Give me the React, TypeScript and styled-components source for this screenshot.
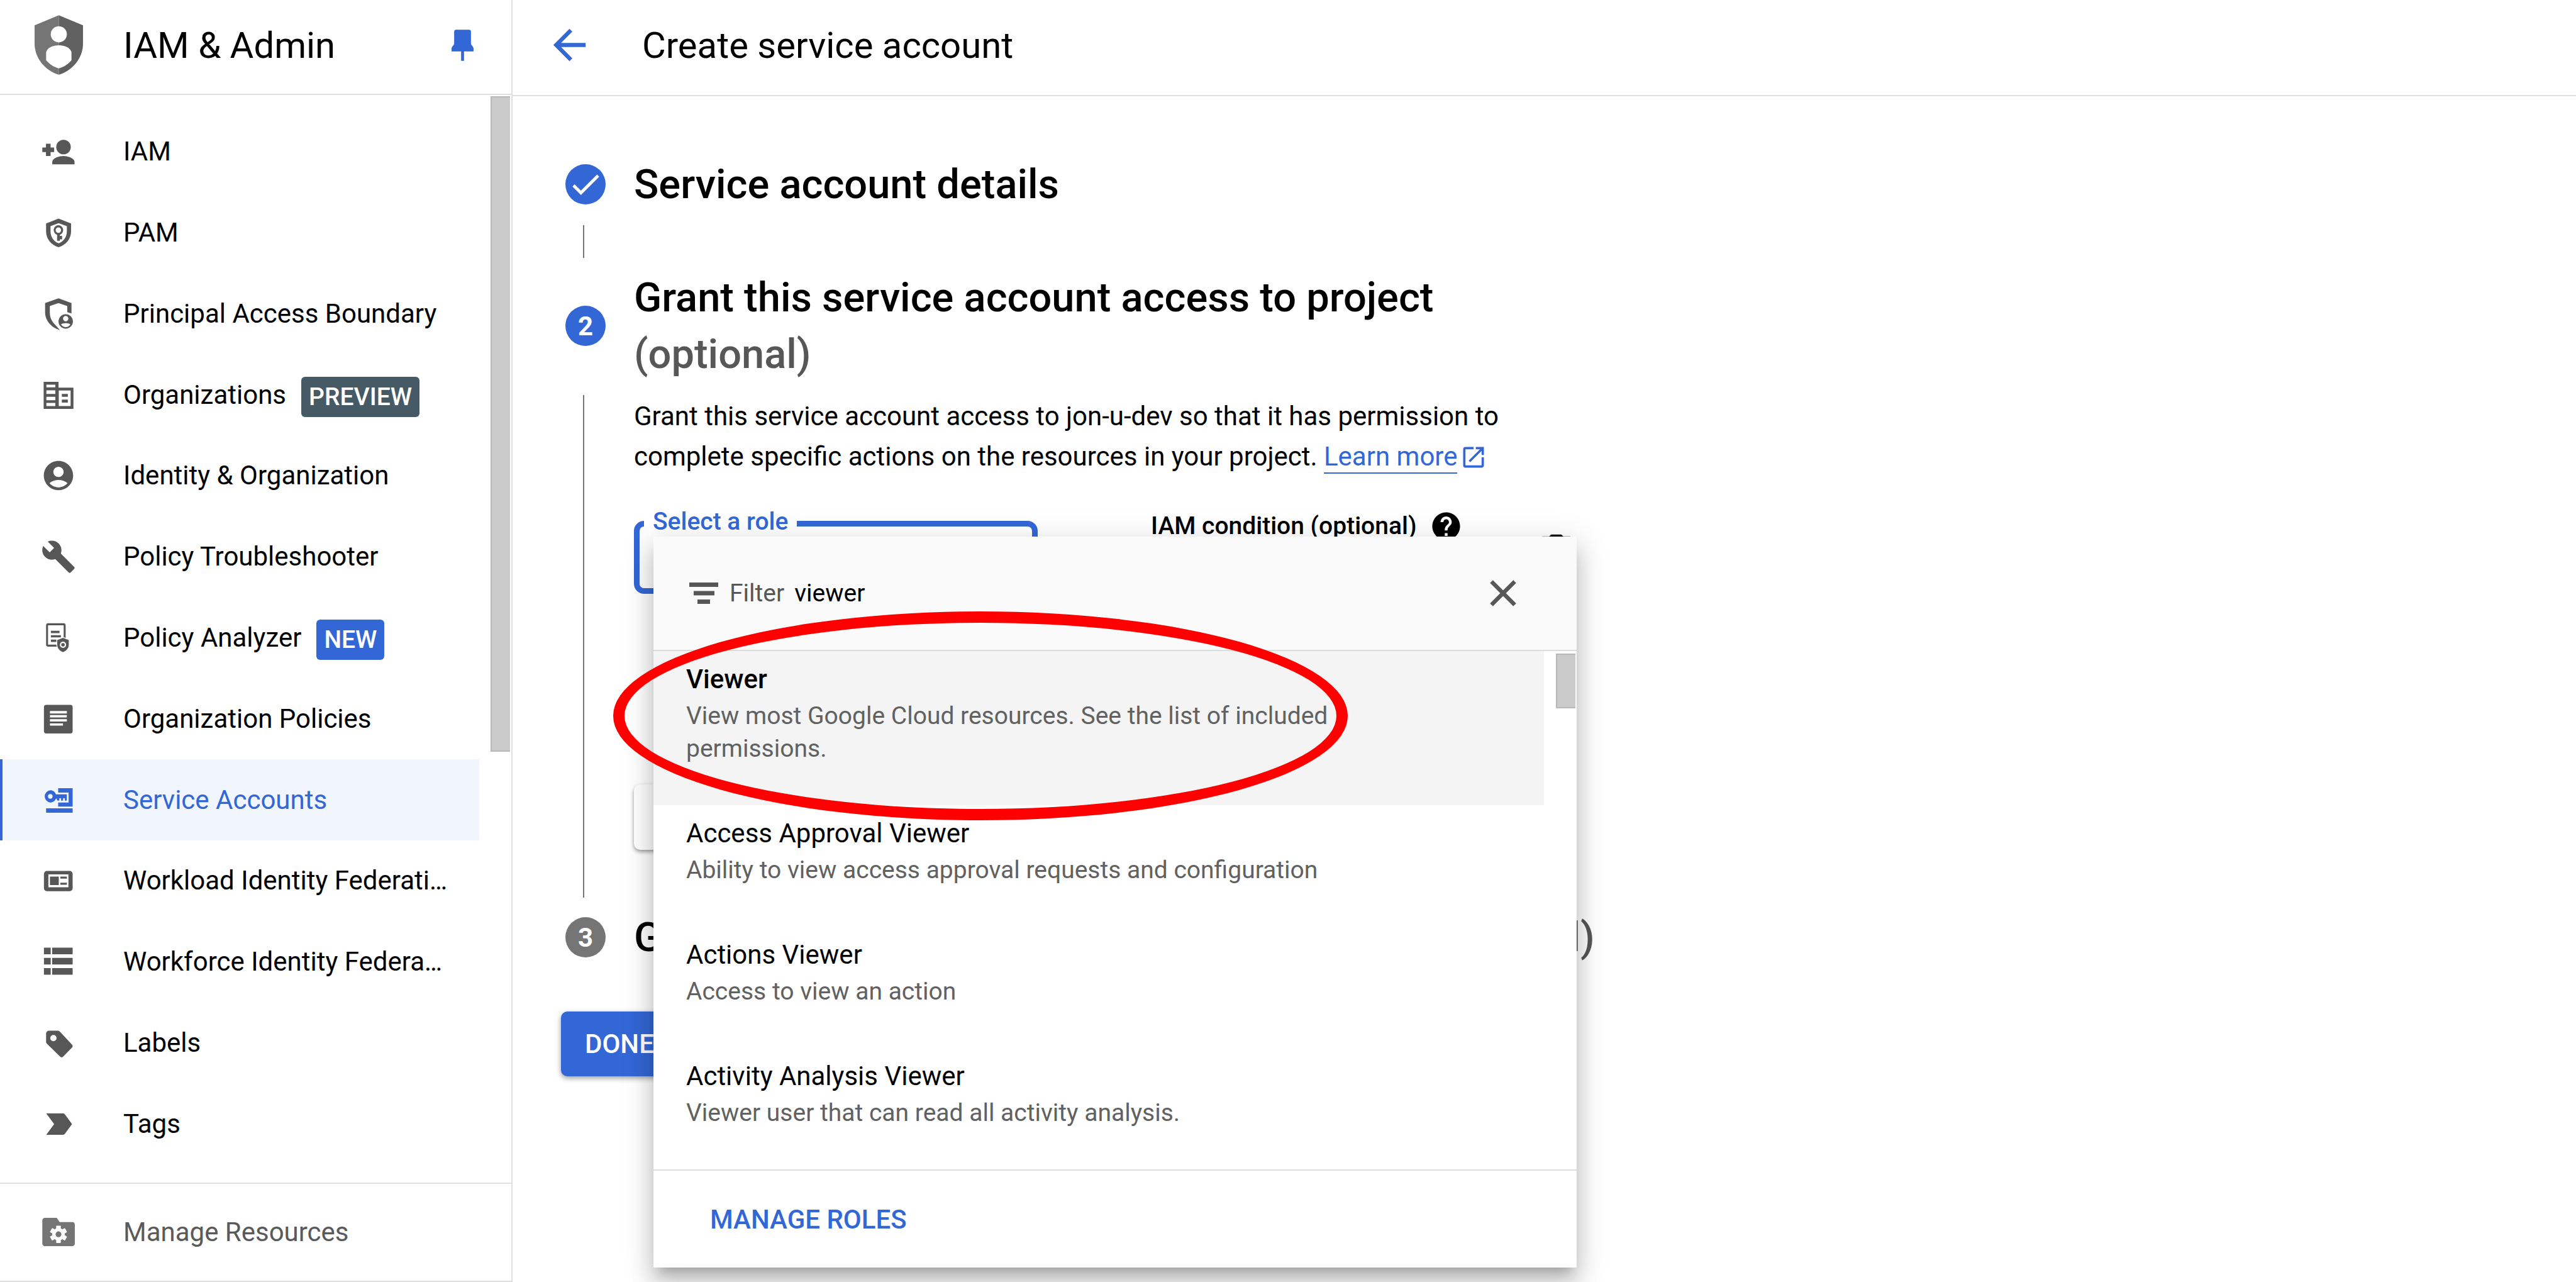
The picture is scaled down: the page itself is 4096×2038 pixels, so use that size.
import React, { useState } from "react";
import styled, { createGlobalStyle } from "styled-components";
import {
  MdAccountCircle,
  MdArrowBack,
  MdBuild,
  MdCheck,
  MdDelete,
  MdHelp,
  MdOpenInNew,
} from "react-icons/md";

const blue = "#3367d6";
const grey = "#757575";
const darkGrey = "#575757";
const rule = "#e0e0e0";

const GlobalStyle = createGlobalStyle`
  *, *::before, *::after { box-sizing: border-box; }
  body {
    margin: 0;
    background: #fff;
    color: #000;
    font-family: Roboto, "Liberation Sans", sans-serif;
    font-size: 42px;
  }
  h1, h2, p, ul, ol { margin: 0; padding: 0; }
  ul, ol { list-style: none; }
  button, input { font: inherit; color: inherit; border: 0; padding: 0; background: none; }
  a { color: inherit; text-decoration: none; }
  svg { display: block; flex: none; }
`;

const Page = styled.div`
  display: grid;
  grid-template-columns: 815px minmax(0, 1fr);
  height: 100vh;
  overflow: hidden;
`;

/* Sidebar */

const Sidebar = styled.aside`
  display: flex;
  flex-direction: column;
  min-height: 0;
  border-right: 2px solid ${rule};
  border-bottom: 2px solid ${rule};
`;

const SidebarHeader = styled.header`
  display: flex;
  align-items: center;
  height: 151px;
  padding: 0 60px 6px 55px;
  border-bottom: 2px solid ${rule};
`;

const BarTitle = styled.h1`
  font-size: 58px;
  line-height: 72px;
  font-weight: 400;
`;

const ProductTitle = styled(BarTitle)`
  flex: 1;
  padding-left: 64px;
`;

const IconButton = styled.button<{ $color: string }>`
  display: flex;
  color: ${(p) => p.$color};
  cursor: pointer;
`;

const NavScroll = styled.nav`
  display: flex;
  flex: 1;
  min-height: 0;
`;

const NavList = styled.ul`
  display: flex;
  flex-direction: column;
  width: 762px;
  padding: 26px 0 29px;
`;

const NavItem = styled.li`
  flex: 1;
  display: flex;
`;

const NavLink = styled.a<{ $active?: boolean }>`
  flex: 1;
  min-width: 0;
  display: flex;
  align-items: center;
  padding: 0 48px 0 61px;
  border-left: 4px solid ${(p) => (p.$active ? blue : "transparent")};
  background: ${(p) => (p.$active ? "#f0f5fe" : "transparent")};
  color: ${(p) => (p.$active ? blue : "#000")};

  svg {
    color: ${(p) => (p.$active ? blue : darkGrey)};
  }
`;

const NavText = styled.span`
  margin-left: 75px;
  line-height: 64px;
  white-space: nowrap;
  overflow: hidden;
  text-overflow: ellipsis;
`;

const Badge = styled.span<{ $color: string }>`
  margin: 6px 0 0 24px;
  padding: 0 12px;
  border-radius: 6px;
  background: ${(p) => p.$color};
  color: #fff;
  font-size: 39px;
  line-height: 64px;
  font-weight: 500;
`;

const Track = styled.div`
  flex: 1;
  display: flex;
  justify-content: flex-end;
  padding: 2px 2px 0 0;
`;

const Thumb = styled.div<{ $height: number }>`
  width: 31px;
  height: ${(p) => p.$height}px;
  background: #cbcbcb;
  border: 2px solid #b8b8b8;
  border-right: 0;
`;

const SidebarFooter = styled.a`
  display: flex;
  align-items: center;
  height: 156px;
  padding-left: 65px;
  border-top: 2px solid ${rule};
  color: #5a5a5a;

  svg {
    color: ${grey};
  }
`;

/* Main column */

const Main = styled.main`
  min-width: 0;
`;

const TopBar = styled.header`
  display: flex;
  align-items: center;
  gap: 77px;
  height: 153px;
  padding: 0 52px 8px;
  border-bottom: 2px solid ${rule};
`;

const Stepper = styled.ol`
  padding: 95px 0 0 84px;
`;

const Step = styled.li`
  display: grid;
  grid-template-columns: 64px 1536px;
  column-gap: 45px;
`;

const StepMarker = styled.span<{ $color: string }>`
  align-self: center;
  display: flex;
  align-items: center;
  justify-content: center;
  width: 64px;
  height: 64px;
  border-radius: 50%;
  background: ${(p) => p.$color};
  color: #fff;
  font-weight: 700;
`;

const StepTitle = styled.h2`
  font-size: 65px;
  line-height: 90px;
  font-weight: 500;
`;

const Muted = styled.span`
  color: ${darkGrey};
`;

const StepLine = styled.div`
  width: 2px;
  min-height: 52px;
  margin: 20px 0 18px 28px;
  background: ${grey};
`;

const StepBody = styled.div`
  padding: 22px 0 94px;
`;

const Description = styled.p`
  line-height: 64px;
`;

const LearnMore = styled.a`
  display: inline-flex;
  align-items: center;
  gap: 4px;
  color: ${blue};
  line-height: 50px;

  span {
    border-bottom: 2px solid ${blue};
  }
`;

const FieldRow = styled.div`
  display: flex;
  align-items: flex-start;
  margin-top: 46px;
`;

const RoleField = styled.div`
  position: relative;
  width: 642px;
  height: 116px;
  margin: 24px 180px 0 0;
  border: 9px solid ${blue};
  border-radius: 16px;
`;

const FloatingLabel = styled.span`
  position: absolute;
  left: 7px;
  top: -34px;
  padding: 0 14px;
  background: #fff;
  color: ${blue};
  font-size: 39px;
  line-height: 52px;
  font-weight: 500;
`;

const Condition = styled.div`
  display: flex;
  align-items: center;
  gap: 20px;
  font-size: 39px;
  line-height: 64px;
  font-weight: 500;
  white-space: nowrap;
`;

const DeleteButton = styled(IconButton)`
  margin: 36px 0 0 110px;
`;

const AddRole = styled.button`
  display: block;
  width: 470px;
  height: 104px;
  margin-top: 303px;
  border-radius: 10px;
  background: #fff;
  box-shadow: 0 3px 6px rgba(0, 0, 0, 0.4);
`;

const DoneButton = styled.button`
  display: block;
  height: 103px;
  margin: 73px 0 0 77px;
  padding: 0 38px;
  border-radius: 10px;
  background: ${blue};
  box-shadow: 0 3px 8px rgba(0, 0, 0, 0.4);
  color: #fff;
  font-weight: 500;
`;

/* Role picker */

const Popup = styled.div`
  position: absolute;
  z-index: 2;
  left: 22px;
  top: 16px;
  width: 1468px;
  background: #fff;
  box-shadow: 0 16px 16px -10px rgba(0, 0, 0, 0.2),
    0 26px 32px 3px rgba(0, 0, 0, 0.14), 0 10px 45px 6px rgba(0, 0, 0, 0.12);
`;

const FilterBar = styled.div`
  display: flex;
  align-items: center;
  height: 182px;
  padding: 0 96px 0 57px;
  border-bottom: 2px solid #dcdcdc;
  background: #fafafa;
  font-size: 39px;

  label {
    display: flex;
    align-items: center;
    gap: 18px;
    color: ${darkGrey};
  }

  input {
    flex: 1;
    min-width: 0;
    padding-left: 16px;
    color: #000;
    outline: 0;
  }
`;

const RoleScroll = styled.div`
  display: flex;
`;

const RoleList = styled.ul`
  width: 1416px;
`;

const RoleOption = styled.button<{ $active?: boolean }>`
  display: block;
  width: 100%;
  padding: 12px 300px 64px 52px;
  background: ${(p) => (p.$active ? "#f4f4f4" : "#fff")};
  text-align: left;
  cursor: pointer;
`;

const RoleName = styled.span<{ $strong?: boolean }>`
  display: block;
  line-height: 65px;
  font-weight: ${(p) => (p.$strong ? 500 : 400)};
`;

const RoleHint = styled.span`
  display: block;
  color: #616161;
  font-size: 39px;
  line-height: 52px;
`;

const PopupTrack = styled(Track)`
  padding: 4px 2px 0 0;
`;

const PopupFooter = styled.footer`
  display: flex;
  align-items: center;
  height: 156px;
  padding-left: 90px;
  border-top: 2px solid ${rule};
`;

const TextButton = styled.button`
  color: ${blue};
  font-weight: 500;
  cursor: pointer;
`;

const Highlight = styled.div`
  position: absolute;
  left: -64px;
  top: 119px;
  width: 1168px;
  height: 332px;
  border: 18px solid #f00;
  border-radius: 50%;
  pointer-events: none;
`;

/* Icons */

const Glyph = ({ children }: { children: React.ReactNode }) => (
  <svg width="56" height="56" viewBox="0 0 61 61" fill="currentColor" aria-hidden="true">
    {children}
  </svg>
);

const ProductLogo = () => (
  <svg width="77" height="95" viewBox="0 0 84 103" aria-hidden="true">
    <path d="M42 0 0 17.5V49c0 25 18 47 42 54z" fill="#757575" />
    <path d="M42 0 84 17.5V49c0 25-18 47-42 54z" fill="#616161" />
    <circle cx="42" cy="33" r="14" fill="#fff" />
    <path d="M20 64c2-8 12-12 22-12s20 4 22 12v14c-5 6-13 12-22 14-9-2-17-8-22-14z" fill="#fff" />
  </svg>
);

const PinIcon = () => (
  <svg width="35" height="50" viewBox="0 0 38 54" fill="currentColor" aria-hidden="true">
    <path d="M8 0h22a3.500 3.500 0 0 1 3.500 3.500V24c0 3 4.500 5 4.500 9v4.500H21.500V54h-5V37.500H0V33c0-4 4.500-6 4.500-9V3.500A3.500 3.500 0 0 1 8 0z" />
  </svg>
);

const FilterIcon = () => (
  <svg width="46" height="34" viewBox="0 0 46 34" fill="currentColor" aria-hidden="true">
    <path d="M0 0h46v7H0zM7 13.500h33v7H7zM13 27h20v7H13z" />
  </svg>
);

const CloseIcon = () => (
  <svg width="42" height="42" viewBox="0 0 42 42" stroke="currentColor" strokeWidth="6.500" aria-hidden="true">
    <path d="M2.500 2.500l37 37M39.500 2.500l-37 37" />
  </svg>
);

const AddPersonIcon = () => (
  <Glyph>
    <path d="M8.800 17h8v6.400H23v7.800h-6.200V38h-8v-6.800H2.500v-7.800h6.300z" />
    <circle cx="39.200" cy="22.600" r="12.600" />
    <path d="M19.700 52.500v-4c0-7 12-10.500 19.300-10.500s19.300 3.500 19.300 10.500v4z" />
  </Glyph>
);

const PamIcon = () => (
  <Glyph>
    <path
      fillRule="evenodd"
      d="M30.7 6 52.3 14.5V28c0 13-9 24-21.6 27.5C18 52 9 41 9 28V14.5zM30.7 13.8 16.7 19v9c0 10 6 18 14 20.8C39 46 45 38 45 28v-9z"
    />
    <path
      fillRule="evenodd"
      d="M30.3 17.5a8.5 8.5 0 0 1 2.4 16.6V36h4v6h-4v2.5h-4.6V34.1a8.5 8.5 0 0 1 2.2-16.6zm0 3.8a4.7 4.7 0 1 0 0 9.4 4.7 4.7 0 0 0 0-9.4z"
    />
  </Glyph>
);

const BoundaryIcon = () => (
  <Glyph>
    <path d="M30.5 3.5 53 11.8v18l-7.3-2.3V17L30.5 11.8 15.5 17v11c0 9 3.500 16 9.500 21.500l8 9C17 54 7.300 41 7.300 28V11.800z" />
    <path
      fillRule="evenodd"
      d="M43 31a12.500 12.500 0 1 1 0 25 12.500 12.500 0 0 1 0-25zm0 3a4.600 4.600 0 1 0 0 9.200 4.600 4.600 0 0 0 0-9.200zm0 12.500c-4 0-8 1.200-8 2.500 2 3 5 4.500 8 4.500s6-1.500 8-4.500c0-1.300-4-2.500-8-2.500z"
    />
  </Glyph>
);

const OrganizationsIcon = () => (
  <Glyph>
    <path
      fillRule="evenodd"
      d="M4.800 7.500h25.800v10.300h25.800v36.600H4.800zM9.500 12.400v4.800h15.500v-4.800zM9.500 22.300v6.200h15.500v-6.200zM9.500 33.400v6h15.500v-6zM9.500 44v5.500h15.500V44zM31 22.500v27h20.500v-27z"
    />
    <path d="M36.300 28.600h10.400v5H36.300zM36.300 38.500h10.400v5H36.300z" />
  </Glyph>
);

const AnalyzerIcon = () => (
  <Glyph>
    <rect x="10.700" y="7" width="30.500" height="37" rx="2" fill="none" stroke="currentColor" strokeWidth="3.400" />
    <path d="M17.300 18.300h15v4h-15zM17.300 25.800h17.400v4H17.300zM17.300 33.500h10v4h-10z" />
    <path
      d="M38.300 30.500l10 3.700v8c0 6-4 11-10 13-6-2-10-7-10-13v-8z"
      stroke="#fff"
      strokeWidth="3"
      paintOrder="stroke"
    />
    <circle cx="38.300" cy="42.500" r="4.200" fill="none" stroke="#fff" strokeWidth="2.400" />
  </Glyph>
);

const PoliciesIcon = () => (
  <Glyph>
    <path
      fillRule="evenodd"
      d="M9.300 6h41.700a4 4 0 0 1 4 4v41.500a4 4 0 0 1-4 4H9.300a4 4 0 0 1-4-4V10a4 4 0 0 1 4-4zM15.700 16.500v4.500H45v-4.500zM15.700 23.800v4H45v-4zM15.700 30.800v4H45v-4zM15.700 38v4h22.600v-4z"
    />
  </Glyph>
);

const ServiceIcon = () => (
  <Glyph>
    <path d="M30 9.700h25v32H30v-7.200h18V17.300H30z" />
    <path
      fillRule="evenodd"
      d="M16.300 13.300c4.600 0 8 2.500 9.800 7H45v11h-3.500v-4h-3v4h-3.600v-4h-3v4h-3l-2.500-4c-1.800 4.400-5.500 7.300-10.100 7.300a10.700 10.700 0 0 1 0-21.300zm0 6.700a4 4 0 1 0 0 8 4 4 0 0 0 0-8z"
    />
    <path d="M9 44.600h46v7.600H9z" />
  </Glyph>
);

const WorkloadIcon = () => (
  <Glyph>
    <path
      fillRule="evenodd"
      d="M10.300 13.700H50a5 5 0 0 1 5 5v25a5 5 0 0 1-5 5H10.300a5 5 0 0 1-5-5v-25a5 5 0 0 1 5-5zM13 19.500v22.400h34.700V19.500z"
    />
    <path d="M15.700 23.300H31V38H15.700zM33.700 23.300H45v3.700H33.700zM33.700 34H45v3.700H33.700z" />
  </Glyph>
);

const WorkforceIcon = () => (
  <Glyph>
    <path d="M5.300 6H17v11.500H5.300zM19.500 6H55v11.500H19.500zM5.300 23.700H17v11.500H5.300zM19.500 23.700H55v11.500H19.500zM5.300 41.400H17v11.500H5.300zM19.500 41.400H55v11.500H19.500z" />
  </Glyph>
);

const LabelsIcon = () => (
  <Glyph>
    <path
      fillRule="evenodd"
      d="M14 9.300h15c1.500 0 3 .7 4.200 1.800L54 33.500c1.300 1.500 1.300 3.500 0 5L38.500 54.300c-1.500 1.500-3.500 1.500-5 0L10.700 32A5 5 0 0 1 9 28.500v-14a5 5 0 0 1 5-5.200zm7.700 7.200a5.500 5.500 0 1 0 0 11 5.500 5.500 0 0 0 0-11z"
    />
  </Glyph>
);

const TagsIcon = () => (
  <Glyph>
    <path d="M9.300 12h29.200a4 4 0 0 1 3 1.500L54 30.500 41.500 47.500a4 4 0 0 1-3 1.500H9.300L23 30.500z" />
  </Glyph>
);

const ManageIcon = () => (
  <Glyph>
    <path d="M7 5.500h20.500l5 7.200h22a4.500 4.500 0 0 1 4.300 4.500V50a4.500 4.500 0 0 1-4.500 4.500H7A4.500 4.500 0 0 1 2.500 50V10A4.500 4.500 0 0 1 7 5.500z" />
    <g fill="#fff" transform="translate(30.500 34)">
      {[0, 60, 120].map((a) => (
        <rect key={a} x="-4" y="-15" width="8" height="30" rx="1" transform={`rotate(${a})`} />
      ))}
      <circle r="11" />
    </g>
    <circle cx="30.500" cy="34" r="5" />
  </Glyph>
);

interface NavEntry {
  label: string;
  icon: React.ReactNode;
  badge?: { text: string; color: string };
  active?: boolean;
}

const navEntries: NavEntry[] = [
  { label: "IAM", icon: <AddPersonIcon /> },
  { label: "PAM", icon: <PamIcon /> },
  { label: "Principal Access Boundary", icon: <BoundaryIcon /> },
  { label: "Organizations", icon: <OrganizationsIcon />, badge: { text: "PREVIEW", color: "#455a64" } },
  { label: "Identity & Organization", icon: <MdAccountCircle size={56} /> },
  { label: "Policy Troubleshooter", icon: <MdBuild size={56} /> },
  { label: "Policy Analyzer", icon: <AnalyzerIcon />, badge: { text: "NEW", color: blue } },
  { label: "Organization Policies", icon: <PoliciesIcon /> },
  { label: "Service Accounts", icon: <ServiceIcon />, active: true },
  { label: "Workload Identity Federation", icon: <WorkloadIcon /> },
  { label: "Workforce Identity Federation", icon: <WorkforceIcon /> },
  { label: "Labels", icon: <LabelsIcon /> },
  { label: "Tags", icon: <TagsIcon /> },
];

const roles = [
  { name: "Viewer", hint: "View most Google Cloud resources. See the list of included permissions." },
  { name: "Access Approval Viewer", hint: "Ability to view access approval requests and configuration" },
  { name: "Actions Viewer", hint: "Access to view an action" },
  { name: "Activity Analysis Viewer", hint: "Viewer user that can read all activity analysis." },
];

function RolePicker() {
  const [filter, setFilter] = useState("viewer");
  const shown = roles.filter((r) => r.name.toLowerCase().includes(filter.toLowerCase()));
  return (
    <Popup>
      <FilterBar>
        <label htmlFor="role-filter">
          <FilterIcon />
          Filter
        </label>
        <input id="role-filter" type="text" value={filter} onChange={(e) => setFilter(e.target.value)} />
        <IconButton type="button" $color={darkGrey} aria-label="Clear filter" onClick={() => setFilter("")}>
          <CloseIcon />
        </IconButton>
      </FilterBar>
      <RoleScroll>
        <RoleList>
          {shown.map((r, i) => (
            <li key={r.name}>
              <RoleOption type="button" $active={i === 0}>
                <RoleName $strong={i === 0}>{r.name}</RoleName>
                <RoleHint>{r.hint}</RoleHint>
              </RoleOption>
            </li>
          ))}
        </RoleList>
        <PopupTrack>
          <Thumb $height={87} />
        </PopupTrack>
      </RoleScroll>
      <PopupFooter>
        <TextButton type="button">MANAGE ROLES</TextButton>
      </PopupFooter>
      <Highlight />
    </Popup>
  );
}

export default function App() {
  return (
    <Page>
      <GlobalStyle />
      <Sidebar>
        <SidebarHeader>
          <ProductLogo />
          <ProductTitle as="div">IAM &amp; Admin</ProductTitle>
          <IconButton type="button" $color={blue} aria-label="Unpin menu">
            <PinIcon />
          </IconButton>
        </SidebarHeader>
        <NavScroll>
          <NavList>
            {navEntries.map((n) => (
              <NavItem key={n.label}>
                <NavLink href="#" $active={n.active} aria-current={n.active ? "page" : undefined}>
                  {n.icon}
                  <NavText>{n.label}</NavText>
                  {n.badge && <Badge $color={n.badge.color}>{n.badge.text}</Badge>}
                </NavLink>
              </NavItem>
            ))}
          </NavList>
          <Track>
            <Thumb $height={1042} />
          </Track>
        </NavScroll>
        <SidebarFooter href="#">
          <ManageIcon />
          <NavText>Manage Resources</NavText>
        </SidebarFooter>
      </Sidebar>

      <Main>
        <TopBar>
          <IconButton type="button" $color={blue} aria-label="Back">
            <MdArrowBack size={77} />
          </IconButton>
          <BarTitle>Create service account</BarTitle>
        </TopBar>
        <Stepper>
          <Step>
            <StepMarker $color={blue}>
              <MdCheck size={58} />
            </StepMarker>
            <StepTitle>Service account details</StepTitle>
            <StepLine />
          </Step>
          <Step>
            <StepMarker $color={blue}>2</StepMarker>
            <StepTitle>
              Grant this service account access to project <Muted>(optional)</Muted>
            </StepTitle>
            <StepLine />
            <StepBody>
              <Description>
                Grant this service account access to jon-u-dev so that it has permission to complete specific actions
                on the resources in your project.{" "}
                <LearnMore href="#">
                  <span>Learn more</span>
                  <MdOpenInNew size={44} />
                </LearnMore>
              </Description>
              <FieldRow>
                <RoleField>
                  <FloatingLabel>Select a role</FloatingLabel>
                  <RolePicker />
                </RoleField>
                <Condition>
                  IAM condition (optional)
                  <MdHelp size={53} />
                </Condition>
                <DeleteButton type="button" $color="#000" aria-label="Delete role">
                  <MdDelete size={77} />
                </DeleteButton>
              </FieldRow>
              <AddRole type="button" aria-label="Add another role" />
            </StepBody>
          </Step>
          <Step>
            <StepMarker $color={grey}>3</StepMarker>
            <StepTitle>
              Grant users access to this service account <Muted>(optional)</Muted>
            </StepTitle>
          </Step>
        </Stepper>
        <DoneButton type="button">DONE</DoneButton>
      </Main>
    </Page>
  );
}
